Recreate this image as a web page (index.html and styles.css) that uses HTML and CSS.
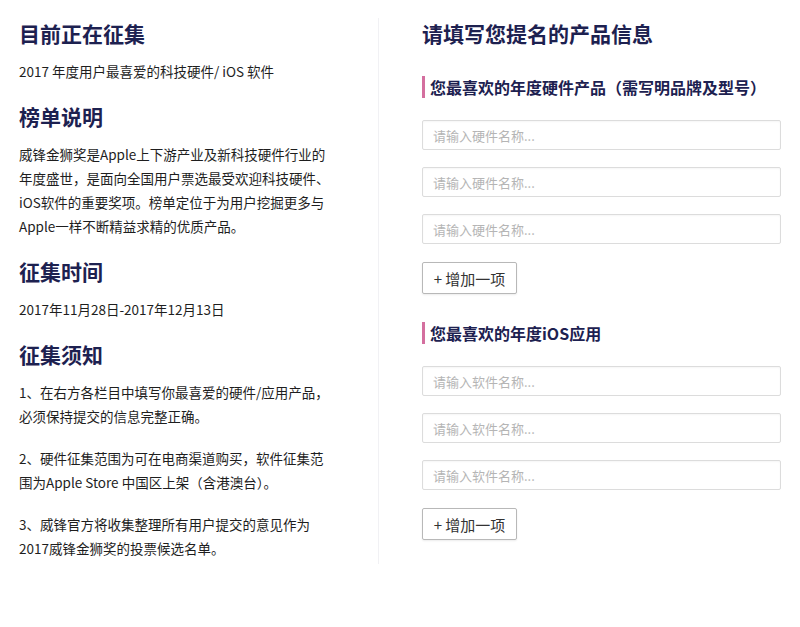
FILE: index.html
```html
<!DOCTYPE html>
<html lang="zh-CN">
<head>
  <meta charset="UTF-8" />
  <meta name="viewport" content="width=device-width, initial-scale=1.0"/>
  <title>2017 威锋金狮奖 征集</title>
  <link rel="stylesheet" href="styles.css">
</head>
<body>

  <div class="page">
    <div class="intro">
      <h2>目前正在征集</h2>
      <p>2017 年度用户最喜爱的科技硬件/ iOS 软件</p>

      <h2>榜单说明</h2>
      <p>威锋金狮奖是Apple上下游产业及新科技硬件行业的年度盛世，是面向全国用户票选最受欢迎科技硬件、iOS软件的重要奖项。榜单定位于为用户挖掘更多与Apple一样不断精益求精的优质产品。</p>

      <h2>征集时间</h2>
      <p>2017年11月28日-2017年12月13日</p>

      <h2>征集须知</h2>
      <p>1、在右方各栏目中填写你最喜爱的硬件/应用产品，必须保持提交的信息完整正确。</p>
      <p>2、硬件征集范围为可在电商渠道购买，软件征集范围为Apple Store 中国区上架（含港澳台）。</p>
      <p>3、威锋官方将收集整理所有用户提交的意见作为2017威锋金狮奖的投票候选名单。</p>
    </div>

    <form class="nominate" onsubmit="return false">
      <h2>请填写您提名的产品信息</h2>

      <div class="group" id="hardware">
        <h3>您最喜欢的年度硬件产品（需写明品牌及型号）</h3>
        <div class="fields">
          <input type="text" placeholder="请输入硬件名称..." />
          <input type="text" placeholder="请输入硬件名称..." />
          <input type="text" placeholder="请输入硬件名称..." />
        </div>
        <button type="button" onclick="addField('hardware')">+ 增加一项</button>
      </div>

      <div class="group" id="software">
        <h3>您最喜欢的年度iOS应用</h3>
        <div class="fields">
          <input type="text" placeholder="请输入软件名称..." />
          <input type="text" placeholder="请输入软件名称..." />
          <input type="text" placeholder="请输入软件名称..." />
        </div>
        <button type="button" onclick="addField('software')">+ 增加一项</button>
      </div>
    </form>
  </div>

  <script>
    function addField(groupId) {
      const fields = document.querySelector('#' + groupId + ' .fields');
      const input = document.createElement('input');
      input.type = 'text';
      input.placeholder = groupId === 'hardware' ? '请输入硬件名称...' : '请输入软件名称...';
      fields.appendChild(input);
    }
  </script>
</body>
</html>
```

FILE: styles.css
```css
:root {
  --navy: #1d2150;
  --pink: #d46f9f;
  --text: #1e1e1e;
  --line: #dcdcdc;
}
* {
  box-sizing: border-box;
  margin: 0;
  padding: 0;
}
body {
  font-family: "Noto Sans CJK SC", "Noto Sans", sans-serif;
  background: #fff;
  color: var(--text);
}
.page {
  display: flex;
  align-items: flex-start;
  padding-top: 18px;
}
h2 {
  font-size: 21px;
  line-height: 30px;
  font-weight: bold;
  color: var(--navy);
}
.intro {
  width: 379px;
  padding: 0 44px 4px 19px;
  border-right: 1px solid #f1f1f4;
}
.intro h2 {
  margin-bottom: 11px;
}
.intro p {
  font-size: 13.5px;
  line-height: 24px;
  margin-bottom: 18px;
}
.intro p:last-child {
  margin-bottom: 0;
}
.nominate {
  width: 359px;
  margin-left: 43px;
}
.group {
  margin-top: 28px;
}
.group + .group {
  margin-top: 28px;
}
.group h3 {
  font-size: 16px;
  line-height: 22px;
  font-weight: bold;
  color: var(--navy);
  border-left: 3px solid var(--pink);
  padding-left: 5px;
}
.fields {
  display: flex;
  flex-direction: column;
  gap: 17px;
  margin-top: 22px;
}
input {
  font-family: inherit;
  height: 30px;
  width: 100%;
  border: 1px solid var(--line);
  border-radius: 2px;
  box-shadow: inset 0 1px 2px rgba(0, 0, 0, 0.04);
  padding: 0 10px;
  font-size: 13px;
  color: var(--text);
  outline: none;
}
input::placeholder {
  color: #b5b5b5;
}
button {
  font-family: inherit;
  margin-top: 18px;
  width: 95px;
  height: 32px;
  background: #fff;
  color: #333;
  border: 1px solid #b8b8b8;
  border-radius: 2px;
  box-shadow: 0 1px 2px rgba(0, 0, 0, 0.08);
  font-size: 15px;
  cursor: pointer;
}
button:hover {
  background: #f7f7f7;
}
```
